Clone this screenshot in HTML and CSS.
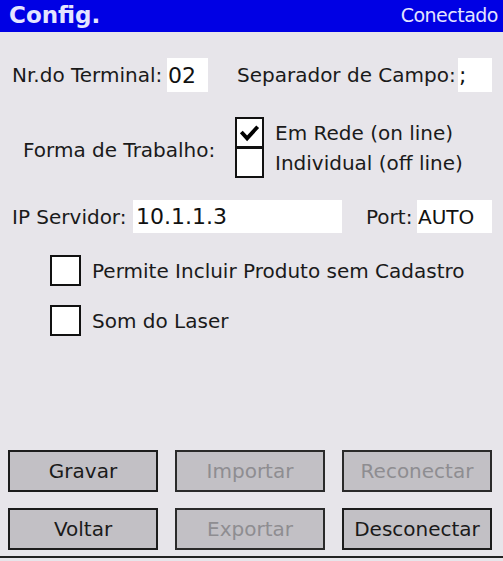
FILE: index.html
```html
<!DOCTYPE html>
<html>
<head>
<meta charset="utf-8">
<link rel="stylesheet" href="styles.css">
</head>
<body>
<div class="screen">
  <div class="header">
    <span class="title">Config.</span>
    <span class="status">Conectado</span>
  </div>
  <div class="row row1">
    <span class="lbl lbl-term">Nr.do Terminal:</span>
    <span class="field f-term">02</span>
    <span class="lbl lbl-sep">Separador de Campo:</span>
    <span class="field f-sep">;</span>
  </div>
  <div class="row row2">
    <span class="lbl lbl-forma">Forma de Trabalho:</span>
    <div class="opts">
      <div class="opt">
        <span class="cb cb-small"><svg viewBox="0 0 26 26" width="26" height="26"><path d="M4.5 12 L10.5 18.5 L21.5 6.5" fill="none" stroke="#000" stroke-width="4"/></svg></span>
        <span class="opt-text">Em Rede (on line)</span>
      </div>
      <div class="opt">
        <span class="cb cb-small"></span>
        <span class="opt-text">Individual (off line)</span>
      </div>
    </div>
  </div>
  <div class="row row3">
    <span class="lbl lbl-ip">IP Servidor:</span>
    <span class="field f-ip">10.1.1.3</span>
    <span class="lbl lbl-port">Port:</span>
    <span class="field f-port">AUTO</span>
  </div>
  <div class="check check1">
    <span class="cb"></span>
    <span class="check-text">Permite Incluir Produto sem Cadastro</span>
  </div>
  <div class="check check2">
    <span class="cb"></span>
    <span class="check-text">Som do Laser</span>
  </div>
  <div class="buttons">
    <div class="btn">Gravar</div>
    <div class="btn disabled">Importar</div>
    <div class="btn disabled">Reconectar</div>
    <div class="btn">Voltar</div>
    <div class="btn disabled">Exportar</div>
    <div class="btn">Desconectar</div>
  </div>
  <div class="bottom-line"></div>
</div>
</body>
</html>
```

FILE: styles.css
```css
* { box-sizing: border-box; }
html, body {
  margin: 0;
  padding: 0;
  background: #e7e5ea;
}
body {
  font-family: "DejaVu Sans", sans-serif;
  color: #1a1a1a;
  font-size: 20px;
}
.screen {
  width: 503px;
  height: 561px;
  display: flex;
  flex-direction: column;
  overflow: hidden;
}
.header {
  height: 32px;
  background: #0000e4;
  display: flex;
  align-items: center;
  justify-content: space-between;
  padding: 0 5px 2px 9px;
  color: #e4e4ff;
}
.title {
  font-weight: bold;
  font-size: 23px;
}
.status {
  font-size: 19px;
  letter-spacing: -0.5px;
}
.row {
  display: flex;
  align-items: center;
}
.row1 {
  margin-top: 26px;
  height: 34px;
}
.field {
  background: #fff;
  height: 34px;
  display: flex;
  align-items: center;
  padding-left: 1px;
  font-size: 22px;
  color: #111;
}
.lbl { white-space: nowrap; }
.lbl-term { margin-left: 12px; width: 155px; }
.f-term { width: 41px; }
.lbl-sep { margin-left: 29px; width: 221px; }
.f-sep { width: 34px; }

.row2 {
  margin-top: 25px;
  height: 61px;
}
.lbl-forma { margin-left: 23px; width: 212px; padding-top: 4px; }
.opts {
  display: flex;
  flex-direction: column;
}
.opt {
  display: flex;
  align-items: center;
  height: 30px;
}
.cb {
  width: 31px;
  height: 31px;
  border: 2px solid #111;
  background: #fff;
  display: flex;
  align-items: center;
  justify-content: center;
  flex: none;
}
.cb-small {
  width: 29px;
  height: 31px;
}
.opt + .opt .cb { margin-top: -1px; }
.opt-text { margin-left: 11px; white-space: nowrap; }

.row3 {
  margin-top: 22px;
  height: 33px;
}
.row3 .field { height: 33px; }
.lbl-ip { margin-left: 12px; width: 121px; }
.f-ip { width: 209px; font-size: 22px; padding-left: 3px; }
.lbl-port { margin-left: 24px; width: 51px; }
.f-port { width: 75px; font-size: 20px; }

.check {
  display: flex;
  align-items: center;
  margin-left: 50px;
  height: 31px;
}
.check1 { margin-top: 22px; }
.check2 { margin-top: 19px; }
.check-text { margin-left: 11px; white-space: nowrap; }

.buttons {
  margin-top: 114px;
  margin-left: 8px;
  display: grid;
  grid-template-columns: repeat(3, 150px);
  grid-auto-rows: 42px;
  column-gap: 17px;
  row-gap: 16px;
}
.btn {
  background: #c2c0c5;
  border: 2px solid #1c1c1c;
  display: flex;
  align-items: center;
  justify-content: center;
  font-size: 20px;
  color: #1a1a1a;
  white-space: nowrap;
}
.btn.disabled {
  color: #8e8d91;
  border-color: #2a2a2a;
}
.bottom-line {
  margin-top: 6px;
  height: 2px;
  background: #222;
}
```
